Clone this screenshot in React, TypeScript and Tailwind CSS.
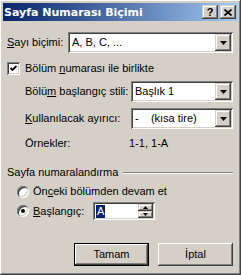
import React from 'react';

const sunken =
  'shadow-[inset_1px_1px_#808080,inset_-1px_-1px_#ffffff,inset_2px_2px_#404040,inset_-2px_-2px_#d4d0c8]';
const raised =
  'shadow-[inset_-1px_-1px_#404040,inset_1px_1px_#ffffff,inset_-2px_-2px_#808080,inset_2px_2px_#d4d0c8]';
const raisedBtn =
  'shadow-[inset_-1px_-1px_#404040,inset_1px_1px_#d4d0c8,inset_-2px_-2px_#808080,inset_2px_2px_#ffffff]';

const Arrow = () => (
  <svg width="7" height="4" viewBox="0 0 7 4">
    <path d="M0 0 L7 0 L3.5 4 Z" fill="#000" />
  </svg>
);

const Combo = ({ value, width }: { value: React.ReactNode; width: string }) => (
  <div className={`h-[21px] ${width} shrink-0 bg-white p-[2px] flex ${sunken}`}>
    <span className="flex-1 pl-[2px] leading-[17px] whitespace-pre">{value}</span>
    <div className={`w-[16px] h-[17px] bg-[#d4d0c8] ${raisedBtn} flex items-center justify-center`}>
      <Arrow />
    </div>
  </div>
);

const Radio = ({ checked }: { checked?: boolean }) => (
  <div className="w-[12px] h-[12px] rounded-full bg-white shrink-0 flex items-center justify-center shadow-[inset_1px_1px_#808080,inset_-1px_-1px_#ffffff,inset_2px_2px_#404040,inset_-2px_-2px_#d4d0c8]">
    {checked && <div className="w-[4px] h-[4px] rounded-full bg-black" />}
  </div>
);

export default function App() {
  return (
    <div
      className={`w-[241px] h-[275px] bg-[#d4d0c8] p-[3px] flex flex-col text-[11px] leading-[13px] text-black whitespace-nowrap ${raised}`}
      style={{ fontFamily: '"Liberation Sans", Arial, sans-serif' }}
    >
      {/* title bar */}
      <div className="h-[18px] shrink-0 flex items-center pl-[1px] pr-[2px] bg-gradient-to-r from-[#0a246a] to-[#a6caf0]">
        <span
          className="flex-1 text-white font-bold text-[11px] leading-none"
          style={{ fontFamily: '"DejaVu Sans", Verdana, sans-serif' }}
        >
          Sayfa Numarası Biçimi
        </span>
        <div className={`w-[16px] h-[14px] bg-[#d4d0c8] ${raisedBtn} flex items-center justify-center font-bold text-[11px] leading-none`}>?</div>
        <div className={`ml-[2px] w-[16px] h-[14px] bg-[#d4d0c8] ${raisedBtn} flex items-center justify-center`}>
          <svg width="8" height="7" viewBox="0 0 8 7">
            <path d="M0.5 0.5 L7.5 6.5 M7.5 0.5 L0.5 6.5" stroke="#000" strokeWidth="1.6" />
          </svg>
        </div>
      </div>

      <div className="flex-1 flex flex-col pl-[4px] pr-[5px]">
        <div className="mt-[11px] flex items-center">
          <span className="w-[61px] shrink-0"><u>S</u>ayı biçimi:</span>
          <Combo value="A, B, C, ..." width="w-[165px]" />
        </div>

        <div className="mt-[9px] flex items-center h-[13px]">
          <div className={`w-[13px] h-[13px] shrink-0 bg-white flex items-center justify-center ${sunken}`}>
            <svg width="7" height="7" viewBox="0 0 7 7">
              <path d="M0.5 3 L2.5 5 L6.5 1" stroke="#000" strokeWidth="1.8" fill="none" />
            </svg>
          </div>
          <span className="ml-[5px]">Bölüm <u>n</u>umarası ile birlikte</span>
        </div>

        <div className="mt-[6px] flex items-center pl-[18px]">
          <span className="w-[106px] shrink-0">Bölü<u>m</u> başlangıç stili:</span>
          <Combo value="Başlık 1" width="w-[102px]" />
        </div>

        <div className="mt-[6px] flex items-center pl-[18px]">
          <span className="w-[106px] shrink-0"><u>K</u>ullanılacak ayırıcı:</span>
          <Combo value={'-    (kısa tire)'} width="w-[102px]" />
        </div>

        <div className="mt-[8px] flex items-center pl-[18px] h-[13px]">
          <span className="w-[104px] shrink-0">Örnekler:</span>
          <span>1-1, 1-A</span>
        </div>

        <div className="mt-[16px] flex items-center h-[13px]">
          <span>Sayfa numaralandırma</span>
          <div className="flex-1 ml-[5px] h-[2px] border-t border-t-[#808080] border-b border-b-white" />
        </div>

        <div className="mt-[6px] flex items-center pl-[10px] h-[13px]">
          <Radio />
          <span className="ml-[4px]">Ön<u>c</u>eki bölümden devam et</span>
        </div>

        <div className="mt-[4px] flex items-center pl-[10px] h-[18px]">
          <Radio checked />
          <span className="ml-[4px] w-[60px] shrink-0"><u>B</u>aşlangıç:</span>
          <div className={`w-[62px] h-[18px] shrink-0 bg-white p-[2px] flex ${sunken}`}>
            <span className="flex-1 flex items-center pl-[1px]">
              <span className="bg-[#0a246a] text-white leading-[13px] px-[1px]">A</span>
            </span>
            <div className="w-[15px] flex flex-col">
              <div className={`h-[7px] bg-[#d4d0c8] ${raisedBtn} flex items-center justify-center`}>
                <svg width="5" height="3" viewBox="0 0 5 3"><path d="M2.5 0 L5 3 L0 3 Z" fill="#000" /></svg>
              </div>
              <div className={`h-[7px] bg-[#d4d0c8] ${raisedBtn} flex items-center justify-center`}>
                <svg width="5" height="3" viewBox="0 0 5 3"><path d="M0 0 L5 0 L2.5 3 Z" fill="#000" /></svg>
              </div>
            </div>
          </div>
        </div>

        <div className="mt-[23px] flex justify-end gap-[9px]">
          <div className="w-[75px] h-[23px] border border-black">
            <div className={`w-full h-full bg-[#d4d0c8] ${raised} flex items-center justify-center`}>Tamam</div>
          </div>
          <div className={`w-[75px] h-[23px] bg-[#d4d0c8] ${raised} flex items-center justify-center`}>İptal</div>
        </div>
      </div>
    </div>
  );
}
